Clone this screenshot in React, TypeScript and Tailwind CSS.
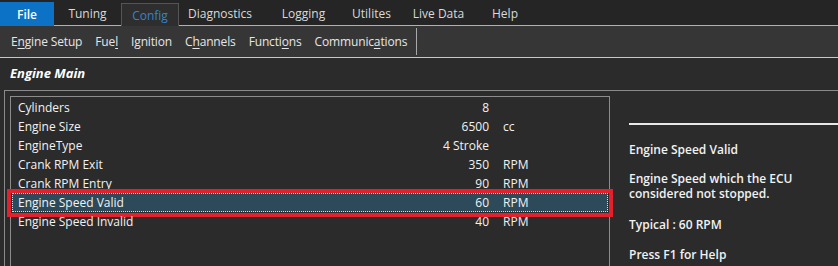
import { ReactNode } from 'react';

const TABS = [
  { label: 'File', w: 'w-[54px]' },
  { label: 'Tuning', w: 'w-[67px]' },
  { label: 'Config', w: 'w-[58px]' },
  { label: 'Diagnostics', w: 'w-[82px]' },
  { label: 'Logging', w: 'w-[85px]' },
  { label: 'Utilites', w: 'w-[51px]' },
  { label: 'Live Data', w: 'w-[83px]' },
  { label: 'Help', w: 'w-[50px]' },
];

const ROWS = [
  { name: 'Cylinders', value: '8', unit: '' },
  { name: 'Engine Size', value: '6500', unit: 'cc' },
  { name: 'EngineType', value: '4 Stroke', unit: '' },
  { name: 'Crank RPM Exit', value: '350', unit: 'RPM' },
  { name: 'Crank RPM Entry', value: '90', unit: 'RPM' },
  { name: 'Engine Speed Valid', value: '60', unit: 'RPM' },
  { name: 'Engine Speed Invalid', value: '40', unit: 'RPM' },
];

const Key = ({ children }: { children: ReactNode }) => (
  <span className="underline underline-offset-[2px]">{children}</span>
);

const SUBMENU: ReactNode[] = [
  <>E<Key>n</Key>gine Setup</>,
  <>Fue<Key>l</Key></>,
  <>I<Key>g</Key>nition</>,
  <>C<Key>h</Key>annels</>,
  <>Functi<Key>o</Key>ns</>,
  <>Communic<Key>a</Key>tions</>,
];

const TabBar = () => (
  <div className="flex h-[26px] items-end bg-[#252525]">
    {TABS.map((t) => {
      if (t.label === 'File') {
        return (
          <div key={t.label} className={`${t.w} h-[24px] bg-[#0b72c6] flex items-center justify-center pt-[1px] font-semibold text-white`}>
            {t.label}
          </div>
        );
      }
      if (t.label === 'Config') {
        return (
          <div key={t.label} className={`${t.w} h-[23px] bg-[#2e2e2e] border-t border-x border-[#555] flex items-center justify-center pt-[2px] text-[#3584c8]`}>
            {t.label}
          </div>
        );
      }
      return (
        <div key={t.label} className={`${t.w} h-[26px] border-b border-[#b0b0b0] flex items-center justify-center pt-[3px] text-[#dadada]`}>
          {t.label}
        </div>
      );
    })}
    <div className="flex-1 h-[26px] border-b border-[#b0b0b0]" />
  </div>
);

const SubMenu = () => (
  <div className="flex h-[32px] items-center bg-[#363636] border-b border-[#c8c8c8] pl-[11px] tracking-[-0.15px] text-[#e6e6e6]">
    <div className="flex gap-[13px]">
      {SUBMENU.map((item, i) => (
        <span key={i}>{item}</span>
      ))}
    </div>
    <div className="ml-[9px] w-px h-[27px] bg-[#a8a8a8]" />
  </div>
);

const ParamList = () => (
  <div className="w-[600px] h-[180px] border border-[#8c8c8c] pt-[1px]">
    {ROWS.map((r) => {
      const selected = r.name === 'Engine Speed Valid';
      return (
        <div
          key={r.name}
          className={`relative mx-[1px] flex h-[19px] items-center ${
            selected ? 'bg-[#2c4a5a] outline outline-1 outline-dotted outline-[#cfe3ee] -outline-offset-1' : ''
          }`}
        >
          <span className="flex-1 pl-[6px]">{r.name}</span>
          <span className="text-right">{r.value}</span>
          <span className="w-[119px] pl-[14px]">{r.unit}</span>
          {selected && (
            <div className="absolute -left-[5px] -right-[5px] -top-[4px] -bottom-[5px] border-[4px] border-[#e3202b]" />
          )}
        </div>
      );
    })}
  </div>
);

const HelpPanel = () => (
  <div className="flex-1 pl-[19px] pt-[27px] font-semibold leading-[15px]">
    <div className="h-[2px] bg-[#e8e8e8]" />
    <p className="mt-[17px]">Engine Speed Valid</p>
    <p className="mt-[14px]">
      Engine Speed which the ECU
      <br />
      considered not stopped.
    </p>
    <p className="mt-[15px] pt-[1px]">Typical : 60 RPM</p>
    <p className="mt-[15px]">Press F1 for Help</p>
  </div>
);

const App = () => {
  return (
    <div className="w-[838px] h-[266px] overflow-hidden bg-[#2b2b2b] text-[12px] text-[#f2f2f2] font-['Open_Sans',sans-serif]">
      <TabBar />
      <SubMenu />
      <div className="h-[32px] flex items-center pl-[10px] text-[13px] font-bold italic text-white">
        Engine Main
      </div>
      <div className="ml-[4px] border-t border-l border-[#8a8a8a] pt-[5px] pl-[5px]">
        <div className="flex">
          <ParamList />
          <HelpPanel />
        </div>
      </div>
    </div>
  );
};

export default App;
